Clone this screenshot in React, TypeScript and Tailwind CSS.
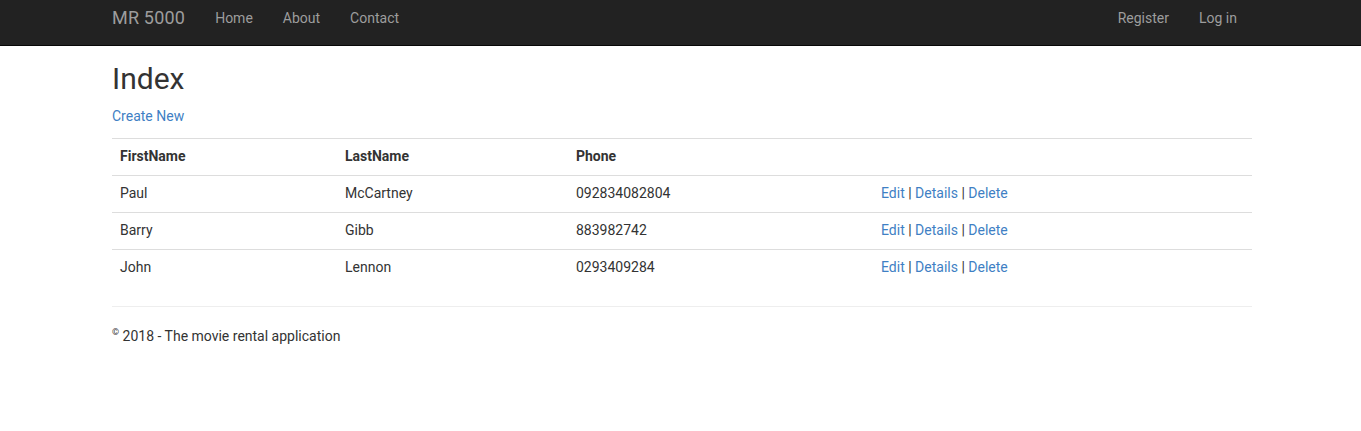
import React from "react";

const rows = [
  { f: "Paul", l: "McCartney", p: "092834082804" },
  { f: "Barry", l: "Gibb", p: "883982742" },
  { f: "John", l: "Lennon", p: "0293409284" },
];

function Actions() {
  return (
    <span>
      <a className="text-[#3f7fc4]">Edit</a> | <a className="text-[#3f7fc4]">Details</a> |{" "}
      <a className="text-[#3f7fc4]">Delete</a>
    </span>
  );
}

export default function App() {
  return (
    <div className="min-h-[431px] bg-white text-[#333] text-[14px] leading-[20px]" style={{ fontFamily: "Roboto, 'Liberation Sans', sans-serif" }}>
      <nav className="h-[46px] bg-[#222] border-b border-[#080808]">
        <div className="ml-[112px] w-[1140px] flex items-start pt-[8px]">
          <span className="text-[18px] leading-[20px] text-[#9d9d9d] mr-[15px] tracking-[0.2px]">MR 5000</span>
          <a className="px-[15px] text-[#9d9d9d]">Home</a>
          <a className="px-[15px] text-[#9d9d9d]">About</a>
          <a className="px-[15px] text-[#9d9d9d]">Contact</a>
          <div className="ml-auto flex">
            <a className="px-[15px] text-[#9d9d9d]">Register</a>
            <a className="pl-[15px] pr-[15px] text-[#9d9d9d]">Log in</a>
          </div>
        </div>
      </nav>
      <div className="ml-[112px] w-[1140px]">
        <h2 className="mt-[16px] text-[30px] leading-[33px] font-normal">Index</h2>
        <p className="mt-[11px]">
          <a className="text-[#3f7fc4]">Create New</a>
        </p>
        <table className="mt-[12px] w-full border-collapse table-fixed">
          <colgroup>
            <col className="w-[225px]" />
            <col className="w-[231px]" />
            <col className="w-[305px]" />
            <col />
          </colgroup>
          <thead>
            <tr className="border-t border-[#ddd]">
              <th className="text-left font-bold px-[8px] pt-[7px] pb-[9px]">FirstName</th>
              <th className="text-left font-bold px-[8px] pt-[7px] pb-[9px]">LastName</th>
              <th className="text-left font-bold px-[8px] pt-[7px] pb-[9px]">Phone</th>
              <th className="px-[8px] pt-[7px] pb-[9px]"></th>
            </tr>
          </thead>
          <tbody>
            {rows.map((r) => (
              <tr key={r.f} className="border-t border-[#ddd]">
                <td className="px-[8px] pt-[7px] pb-[9px]">{r.f}</td>
                <td className="px-[8px] pt-[7px] pb-[9px]">{r.l}</td>
                <td className="px-[8px] pt-[7px] pb-[9px]">{r.p}</td>
                <td className="px-[8px] pt-[7px] pb-[9px]">
                  <Actions />
                </td>
              </tr>
            ))}
          </tbody>
        </table>
        <hr className="mt-[20px] border-t border-[#eee]" />
        <footer className="mt-[19px]">
          <p>
            <span className="text-[9px] leading-[9px] align-top relative top-[2px]">©</span> 2018 - The movie rental application
          </p>
        </footer>
      </div>
    </div>
  );
}
